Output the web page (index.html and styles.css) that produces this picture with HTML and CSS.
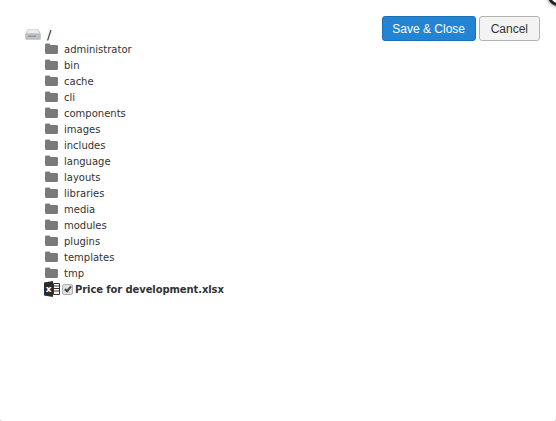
FILE: index.html
```html
<!DOCTYPE html>
<html lang="en">
<head>
    <meta charset="UTF-8">
    <meta name="viewport" content="width=device-width, initial-scale=1.0">
    <title>File Browser</title>
    <link rel="stylesheet" href="styles.css">
</head>
<body>
    <div class="modal">
        <div class="close-corner"></div>
        <div class="actions">
            <button class="btn btn-primary">Save &amp; Close</button>
            <button class="btn btn-default">Cancel</button>
        </div>
        <div class="tree">
            <div class="root">
                <svg class="drive" width="16" height="12" viewBox="0 0 16 12">
                    <path d="M3 1h10l3 5v5l-1 1H1l-1-1V6z" fill="#c9cccf"/>
                    <path d="M3.500 1.500h9L14 5H2z" fill="#e9ebec"/>
                    <rect x="1" y="6" width="14" height="5" fill="#bcc0c3"/>
                    <rect x="3" y="7.500" width="8" height="1.500" fill="#969a9e"/>
                </svg>
                <span>/</span>
            </div>
            <ul class="folders">
                <li><svg class="folder" viewBox="0 0 13 11"><path d="M0 1.500 1 .5h3.500l1 1.500H12l1 1v7l-1 1H1l-1-1z"/></svg>administrator</li>
                <li><svg class="folder" viewBox="0 0 13 11"><path d="M0 1.500 1 .5h3.500l1 1.500H12l1 1v7l-1 1H1l-1-1z"/></svg>bin</li>
                <li><svg class="folder" viewBox="0 0 13 11"><path d="M0 1.500 1 .5h3.500l1 1.500H12l1 1v7l-1 1H1l-1-1z"/></svg>cache</li>
                <li><svg class="folder" viewBox="0 0 13 11"><path d="M0 1.500 1 .5h3.500l1 1.500H12l1 1v7l-1 1H1l-1-1z"/></svg>cli</li>
                <li><svg class="folder" viewBox="0 0 13 11"><path d="M0 1.500 1 .5h3.500l1 1.500H12l1 1v7l-1 1H1l-1-1z"/></svg>components</li>
                <li><svg class="folder" viewBox="0 0 13 11"><path d="M0 1.500 1 .5h3.500l1 1.500H12l1 1v7l-1 1H1l-1-1z"/></svg>images</li>
                <li><svg class="folder" viewBox="0 0 13 11"><path d="M0 1.500 1 .5h3.500l1 1.500H12l1 1v7l-1 1H1l-1-1z"/></svg>includes</li>
                <li><svg class="folder" viewBox="0 0 13 11"><path d="M0 1.500 1 .5h3.500l1 1.500H12l1 1v7l-1 1H1l-1-1z"/></svg>language</li>
                <li><svg class="folder" viewBox="0 0 13 11"><path d="M0 1.500 1 .5h3.500l1 1.500H12l1 1v7l-1 1H1l-1-1z"/></svg>layouts</li>
                <li><svg class="folder" viewBox="0 0 13 11"><path d="M0 1.500 1 .5h3.500l1 1.500H12l1 1v7l-1 1H1l-1-1z"/></svg>libraries</li>
                <li><svg class="folder" viewBox="0 0 13 11"><path d="M0 1.500 1 .5h3.500l1 1.500H12l1 1v7l-1 1H1l-1-1z"/></svg>media</li>
                <li><svg class="folder" viewBox="0 0 13 11"><path d="M0 1.500 1 .5h3.500l1 1.500H12l1 1v7l-1 1H1l-1-1z"/></svg>modules</li>
                <li><svg class="folder" viewBox="0 0 13 11"><path d="M0 1.500 1 .5h3.500l1 1.500H12l1 1v7l-1 1H1l-1-1z"/></svg>plugins</li>
                <li><svg class="folder" viewBox="0 0 13 11"><path d="M0 1.500 1 .5h3.500l1 1.500H12l1 1v7l-1 1H1l-1-1z"/></svg>templates</li>
                <li><svg class="folder" viewBox="0 0 13 11"><path d="M0 1.500 1 .5h3.500l1 1.500H12l1 1v7l-1 1H1l-1-1z"/></svg>tmp</li>
                <li class="file">
                    <svg class="excel" viewBox="0 0 16 16">
                        <path d="M9.500 2.500h6v11h-6z" fill="#fff" stroke="#333"/>
                        <path d="M10 5h5M10 7.500h5M10 10h5" stroke="#333"/>
                        <path d="M0 1.500 9 0v16L0 14.500z" fill="#2b2b2b"/>
                        <text x="1.800" y="11" class="excel-x">x</text>
                    </svg>
                    <input type="checkbox" checked>
                    <span>Price for development.xlsx</span>
                </li>
            </ul>
        </div>
    </div>
</body>
</html>
```

FILE: styles.css
```css
html {
    background-color: #b5b5b5;
}
body {
    margin: 0;
    font-family: "DejaVu Sans", Verdana, sans-serif;
    font-size: 10px;
    color: #333;
}
.modal {
    position: relative;
    height: 421px;
    overflow: hidden;
    background-color: #fff;
    border-radius: 0 0 2px 2px;
}
.close-corner {
    position: absolute;
    top: -14px;
    right: -12px;
    width: 14px;
    height: 14px;
    border: 3px solid #222;
    border-radius: 50%;
    background-color: #fff;
    box-shadow: 0 0 4px rgba(0, 0, 0, 0.6);
}
.actions {
    position: absolute;
    top: 16px;
    right: 16px;
    display: flex;
    gap: 3px;
}
.btn {
    height: 25px;
    padding: 0 11px;
    border-radius: 3px;
    font-family: "Liberation Sans", Arial, sans-serif;
    font-size: 12px;
}
.btn-primary {
    width: 94px;
    padding: 0;
    background-color: #2384d3;
    border: 1px solid #1a6fb5;
    color: #fff;
}
.btn-default {
    background-color: #f3f3f3;
    border: 1px solid #b3b3b3;
    color: #333;
}
.tree {
    padding: 26px 0 0 25px;
}
.root {
    display: flex;
    align-items: center;
    gap: 6px;
    height: 16px;
    font-size: 13px;
    color: #222;
}
.folders {
    list-style: none;
    margin: -1px 0 0;
    padding: 0 0 0 20px;
}
.folders li {
    display: flex;
    align-items: center;
    height: 16px;
}
.folder {
    width: 13px;
    height: 11px;
    margin-right: 6px;
    margin-top: -1px;
    fill: #7a7a7a;
}
.file {
    font-weight: bold;
    letter-spacing: -0.1px;
}
.excel {
    width: 16px;
    height: 16px;
    margin-left: -1px;
}
.excel-x {
    fill: #fff;
    font-size: 9px;
    font-weight: bold;
}
.file input {
    appearance: none;
    position: relative;
    box-sizing: border-box;
    width: 11px;
    height: 11px;
    margin: 0 2px 0 2px;
    background-color: #e2e2e2;
    border: 1px solid #b0b0b0;
    border-radius: 2px;
}
.file input::before {
    content: "";
    position: absolute;
    left: 2.5px;
    top: 0;
    width: 2px;
    height: 5px;
    border: solid #444;
    border-width: 0 2px 2px 0;
    transform: rotate(40deg);
}
```
